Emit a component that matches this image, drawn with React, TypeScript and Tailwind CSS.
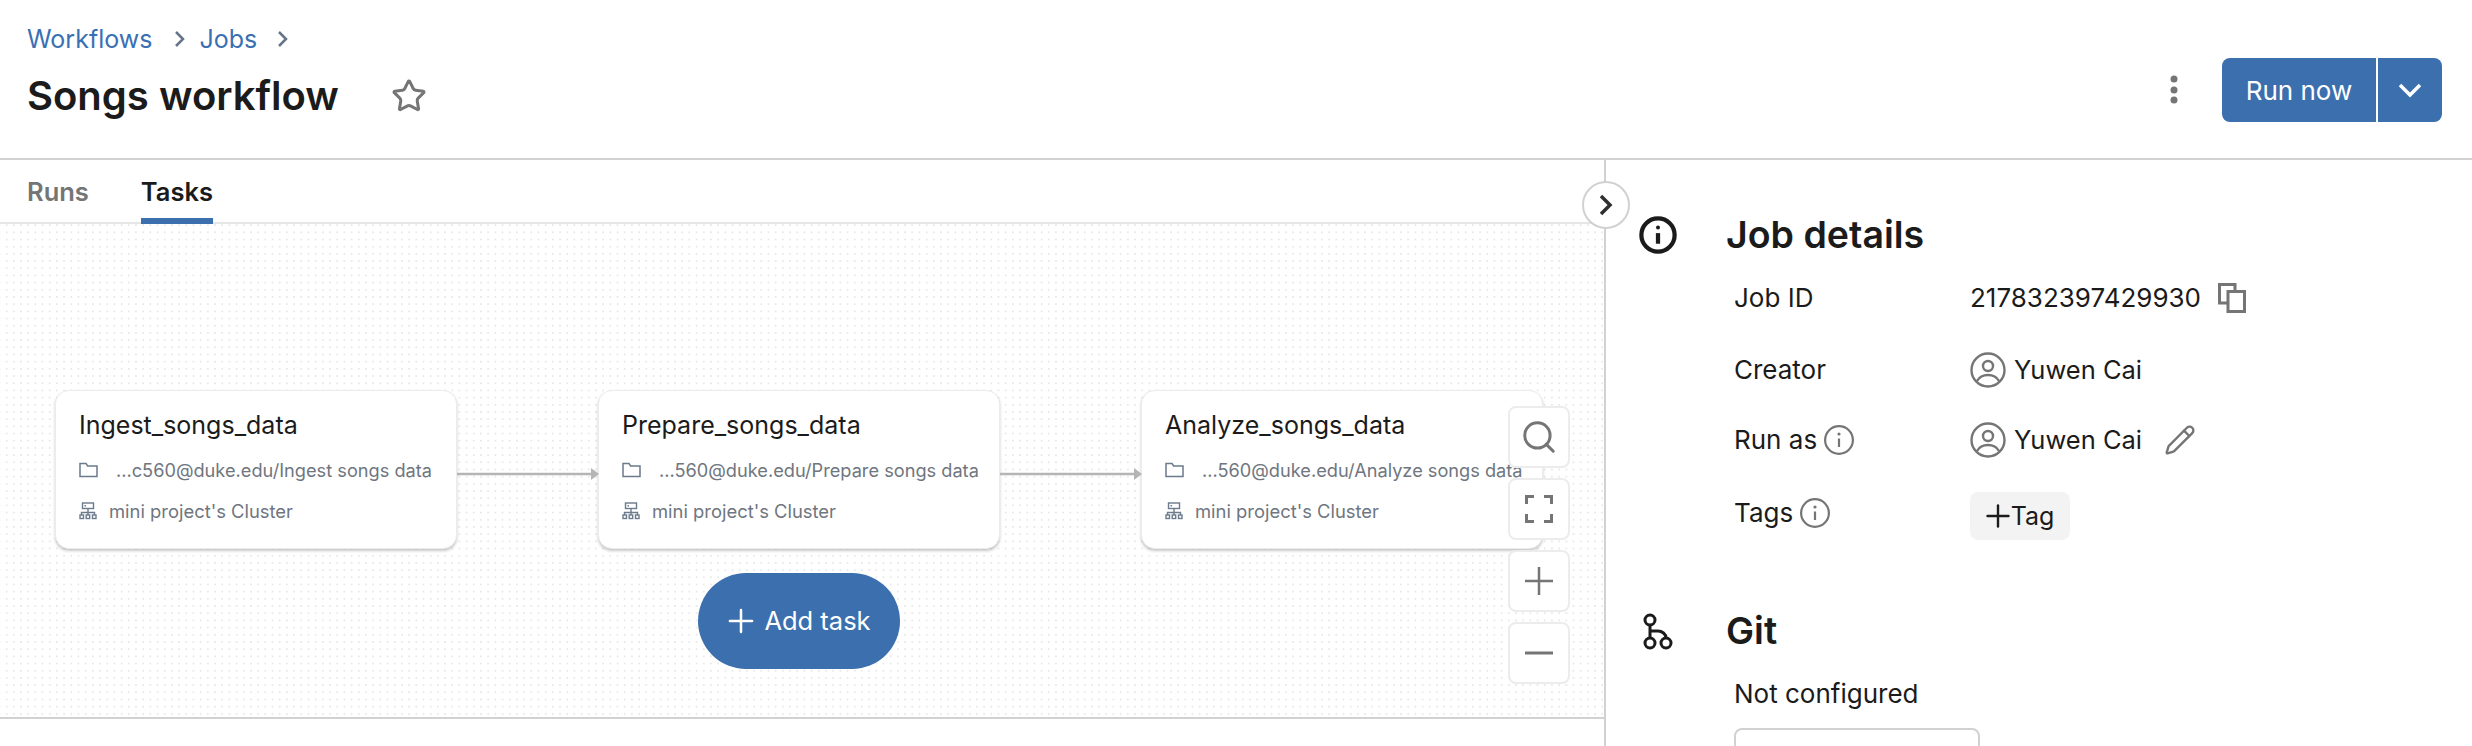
import { Pencil, Plus, Search, Star } from "lucide-react";

const tasks = [
  { name: "Ingest_songs_data", path: "...c560@duke.edu/Ingest songs data", left: "left-[55px]" },
  { name: "Prepare_songs_data", path: "...560@duke.edu/Prepare songs data", left: "left-[598px]" },
  { name: "Analyze_songs_data", path: "...560@duke.edu/Analyze songs data", left: "left-[1141px]" },
];

const FolderIcon = () => (
  <svg width="19" height="16" viewBox="0 0 19 16" fill="none" stroke="#6b7a8c" strokeWidth="1.5" className="shrink-0">
    <path d="M1 1.500h6l1.600 2.500H18v10.500H1z" />
  </svg>
);

const ClusterIcon = () => (
  <svg width="18" height="18" viewBox="0 0 18 18" fill="none" stroke="#6b7a8c" strokeWidth="1.4" className="shrink-0">
    <rect x="3.500" y="1" width="11" height="5.500" />
    <path d="M5.500 3.700h1.500M9 6.500v4M2.500 13v-2.500h13V13M9 10.500V13" />
    <rect x="1" y="13" width="3.500" height="3.500" />
    <rect x="7.200" y="13" width="3.500" height="3.500" />
    <rect x="13.500" y="13" width="3.500" height="3.500" />
  </svg>
);

const UserIcon = () => (
  <svg width="36" height="36" viewBox="0 0 36 36" fill="none" stroke="#757575" strokeWidth="2.400" className="shrink-0">
    <circle cx="18" cy="18" r="16.500" />
    <circle cx="18" cy="14" r="5" />
    <path d="M7 29c2.500-4.500 6.500-6 11-6s8.500 1.500 11 6" />
  </svg>
);

const InfoIcon = ({ size = 32, color = "#757575", width = 2.200 }: { size?: number; color?: string; width?: number }) => (
  <svg width={size} height={size} viewBox="0 0 32 32" fill="none" className="shrink-0">
    <circle cx="16" cy="16" r={15 - width / 2} stroke={color} strokeWidth={width} />
    <circle cx="16" cy="10" r="1.600" fill={color} />
    <path d="M16 14.500v8.500" stroke={color} strokeWidth={width} />
  </svg>
);

const CopyIcon = () => (
  <svg width="28" height="30" viewBox="0 0 28 30" fill="none" stroke="#757575" strokeWidth="3" className="shrink-0 ml-[17px]">
    <path d="M17 8V1.500H1.500V20H10" />
    <rect x="10" y="8.500" width="16.500" height="20" />
  </svg>
);

const Row = ({ label, children, className }: { label: React.ReactNode; children: React.ReactNode; className?: string }) => (
  <div className={`flex items-center ${className ?? ""}`}>
    <div className="w-[236px] flex items-center gap-[6px]">{label}</div>
    {children}
  </div>
);

export default function App() {
  return (
    <div className="[font-family:Inter,'Noto_Sans',sans-serif] w-[2472px] h-[746px] overflow-hidden bg-white text-[#1b1b1b] flex flex-col">
      <header className="h-[160px] shrink-0 border-b-2 border-[#d1d1d1] pl-[27px] pr-[30px] flex justify-between">
        <div className="pt-[22px]">
          <div className="flex items-center text-[25px] leading-[34px] text-[#3a70b3]">
            <span>Workflows</span>
            <svg width="16" height="18" viewBox="0 0 16 18" fill="none" stroke="#64748b" strokeWidth="2.500" className="ml-[20px] mr-[11px]">
              <path d="M4 2l7 7-7 7" />
            </svg>
            <span>Jobs</span>
            <svg width="16" height="18" viewBox="0 0 16 18" fill="none" stroke="#64748b" strokeWidth="2.500" className="ml-[18px]">
              <path d="M4 2l7 7-7 7" />
            </svg>
          </div>
          <div className="mt-[14px] flex items-center">
            <h1 className="text-[40px] leading-[52px] font-semibold">Songs workflow</h1>
            <Star size={36} strokeWidth={2} color="#757575" className="ml-[52px]" />
          </div>
        </div>
        <div className="flex items-center pt-[58px] self-start">
          <svg width="12" height="30" viewBox="0 0 12 30" fill="#757575" className="mr-[42px]">
            <circle cx="6" cy="4" r="3.500" />
            <circle cx="6" cy="15" r="3.500" />
            <circle cx="6" cy="25" r="3.500" />
          </svg>
          <div className="w-[220px] h-[64px] rounded-[8px] bg-[#3b6fae] text-white flex items-center">
            <span className="w-[156px] h-full flex items-center justify-center text-[26px] border-r-2 border-white">Run now</span>
            <span className="flex-1 flex items-center justify-center">
              <svg width="24" height="16" viewBox="0 0 24 16" fill="none" stroke="white" strokeWidth="3.500">
                <path d="M2 3l10 10L22 3" />
              </svg>
            </span>
          </div>
        </div>
      </header>

      <div className="flex-1 flex min-h-0">
        <section className="relative w-[1606px] shrink-0 border-r-2 border-[#d1d1d1] flex flex-col">
          <nav className="h-[64px] shrink-0 border-b-2 border-[#e6e6e6] flex pl-[27px] gap-[52px] text-[25.500px] font-semibold">
            <span className="h-[62px] pt-[13px] text-[#757575]">Runs</span>
            <span className="h-[64px] pt-[13px] border-b-[6px] border-[#3b6fae]">Tasks</span>
          </nav>
          <div className="relative h-[495px] shrink-0 border-b-2 border-[#d1d1d1] overflow-hidden bg-[radial-gradient(#e9e9e9_1.1px,transparent_1.3px)] bg-[size:7.2px_7.2px] bg-[position:3px_4.700px]">
            {tasks.map((task) => (
              <div
                key={task.name}
                className={`absolute top-[166px] ${task.left} w-[402px] h-[159px] rounded-[14px] bg-white border border-[#ececec] shadow-[0_2px_3px_rgba(0,0,0,0.22)] pl-[23px] pt-[17px]`}
              >
                <div className="text-[25px] leading-[34px]">{task.name}</div>
                <div className="mt-[15px] flex items-center text-[#6f7680] text-[18.200px] leading-[26px] whitespace-nowrap">
                  <FolderIcon />
                  <span className="ml-[18px]">{task.path}</span>
                </div>
                <div className="mt-[15px] flex items-center text-[#6f7680] text-[18.400px] leading-[26px] whitespace-nowrap">
                  <ClusterIcon />
                  <span className="ml-[12px]">mini project's Cluster</span>
                </div>
              </div>
            ))}

            <svg width="144" height="12" viewBox="0 0 144 12" className="absolute left-[457px] top-[244px]">
              <path d="M0 6h136" stroke="#b5b5b8" strokeWidth="2.500" />
              <path d="M134 0l8 6-8 6z" fill="#b5b5b8" />
            </svg>
            <svg width="144" height="12" viewBox="0 0 144 12" className="absolute left-[1000px] top-[244px]">
              <path d="M0 6h136" stroke="#b5b5b8" strokeWidth="2.500" />
              <path d="M134 0l8 6-8 6z" fill="#b5b5b8" />
            </svg>

            <button className="absolute left-[698px] top-[349px] w-[202px] h-[96px] rounded-full bg-[#3b6fae] text-white text-[25.500px] flex items-center justify-center">
              <Plus size={38} strokeWidth={1.600} className="-ml-[5px] mr-[4px]" />
              Add task
            </button>

            <div className="absolute left-[1508px] top-[182px] flex flex-col gap-[10px]">
              {[
                <Search key="s" size={38} strokeWidth={1.900} color="#757575" />,
                <svg key="f" width="28" height="28" viewBox="0 0 28 28" fill="none" stroke="#757575" strokeWidth="3">
                  <path d="M1.500 9V1.500H9M19 1.500h7.500V9M26.500 19v7.500H19M9 26.500H1.500V19" />
                </svg>,
                <svg key="p" width="28" height="28" viewBox="0 0 28 28" fill="none" stroke="#757575" strokeWidth="2.500">
                  <path d="M14 0v28M0 14h28" />
                </svg>,
                <svg key="m" width="28" height="28" viewBox="0 0 28 28" fill="none" stroke="#757575" strokeWidth="3">
                  <path d="M0 14h28" />
                </svg>,
              ].map((icon, i) => (
                <div key={i} className="w-[62px] h-[62px] rounded-[8px] bg-white border-2 border-[#ececec] flex items-center justify-center">
                  {icon}
                </div>
              ))}
            </div>
          </div>

          <button className="absolute right-[-26px] top-[21px] w-[48px] h-[48px] rounded-full bg-white border-2 border-[#d1d1d1] flex items-center justify-center">
            <svg width="16" height="22" viewBox="0 0 16 22" fill="none" stroke="#2f2f2f" strokeWidth="3.500">
              <path d="M3 2l9 9-9 9" />
            </svg>
          </button>
        </section>

        <aside className="flex-1 relative pl-[32px]">
          <div className="flex items-center mt-[53px]">
            <InfoIcon size={40} color="#1b1b1b" width={3.400} />
            <h2 className="ml-[48px] text-[37.500px] leading-[44px] font-semibold">Job details</h2>
          </div>
          <div className="pl-[96px] text-[26px] leading-[36px]">
            <Row label="Job ID" className="mt-[23px]">
              <span>217832397429930</span>
              <CopyIcon />
            </Row>
            <Row label="Creator" className="mt-[36px]">
              <UserIcon />
              <span className="ml-[8px] text-[25.500px]">Yuwen Cai</span>
            </Row>
            <Row label={<><span>Run as</span><InfoIcon /></>} className="mt-[34px]">
              <UserIcon />
              <span className="ml-[8px] text-[25.500px]">Yuwen Cai</span>
              <Pencil size={32} color="#757575" strokeWidth={1.800} className="ml-[22px]" />
            </Row>
            <Row
              label={
                <div className="flex items-center gap-[6px] mb-[6px]">
                  <span>Tags</span>
                  <InfoIcon />
                </div>
              }
              className="mt-[34px]"
            >
              <div className="h-[48px] w-[100px] rounded-[8px] bg-[#f3f3f3] flex items-center justify-center text-[25px]">
                <Plus size={36} strokeWidth={1.600} className="-ml-[6px] -mr-[5px]" />
                Tag
              </div>
            </Row>
          </div>
          <div className="flex items-center mt-[69px]">
            <svg width="40" height="40" viewBox="0 0 40 40" fill="none" stroke="#1b1b1b" strokeWidth="3" className="shrink-0">
              <circle cx="12" cy="9" r="5" />
              <circle cx="12" cy="32" r="5" />
              <circle cx="28" cy="32" r="5" />
              <path d="M12 14v13M12 20h8c4 0 8 3 8 7" />
            </svg>
            <h2 className="ml-[48px] text-[37.500px] leading-[44px] font-semibold">Git</h2>
          </div>
          <div className="pl-[96px]">
            <p className="mt-[23px] text-[26px] leading-[36px]">Not configured</p>
            <div className="mt-[16px] w-[246px] h-[60px] rounded-[8px] border-2 border-[#d1d1d1]" />
          </div>
        </aside>
      </div>
    </div>
  );
}
